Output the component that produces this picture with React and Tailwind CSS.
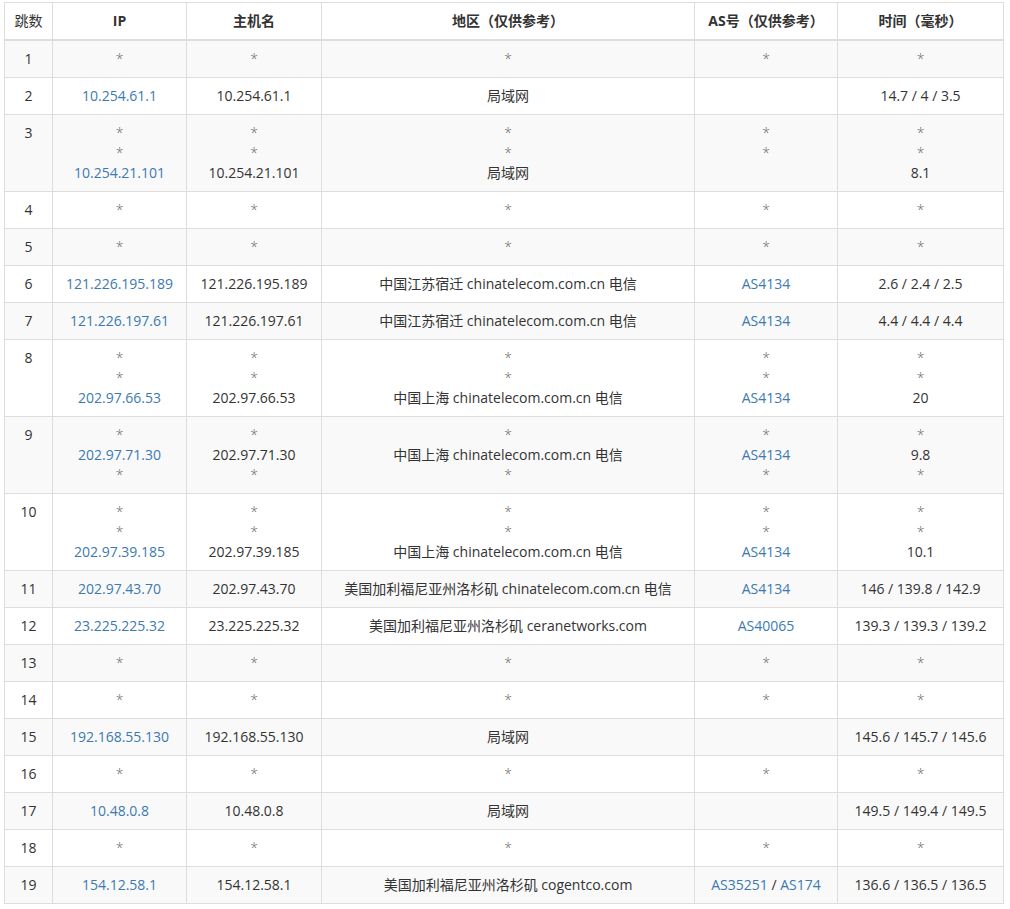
const L = (t) => ({ link: t });
const S = "*";
const CT = "chinatelecom.com.cn 电信";

const rows = [
  [[S], [S], [S], [S], [S]],
  [[L("10.254.61.1")], ["10.254.61.1"], ["局域网"], [""], ["14.7 / 4 / 3.5"]],
  [[S, S, L("10.254.21.101")], [S, S, "10.254.21.101"], [S, S, "局域网"], [S, S, ""], [S, S, "8.1"]],
  [[S], [S], [S], [S], [S]],
  [[S], [S], [S], [S], [S]],
  [[L("121.226.195.189")], ["121.226.195.189"], ["中国江苏宿迁 " + CT], [L("AS4134")], ["2.6 / 2.4 / 2.5"]],
  [[L("121.226.197.61")], ["121.226.197.61"], ["中国江苏宿迁 " + CT], [L("AS4134")], ["4.4 / 4.4 / 4.4"]],
  [[S, S, L("202.97.66.53")], [S, S, "202.97.66.53"], [S, S, "中国上海 " + CT], [S, S, L("AS4134")], [S, S, "20"]],
  [[S, L("202.97.71.30"), S], [S, "202.97.71.30", S], [S, "中国上海 " + CT, S], [S, L("AS4134"), S], [S, "9.8", S]],
  [[S, S, L("202.97.39.185")], [S, S, "202.97.39.185"], [S, S, "中国上海 " + CT], [S, S, L("AS4134")], [S, S, "10.1"]],
  [[L("202.97.43.70")], ["202.97.43.70"], ["美国加利福尼亚州洛杉矶 " + CT], [L("AS4134")], ["146 / 139.8 / 142.9"]],
  [[L("23.225.225.32")], ["23.225.225.32"], ["美国加利福尼亚州洛杉矶 ceranetworks.com"], [L("AS40065")], ["139.3 / 139.3 / 139.2"]],
  [[S], [S], [S], [S], [S]],
  [[S], [S], [S], [S], [S]],
  [[L("192.168.55.130")], ["192.168.55.130"], ["局域网"], [""], ["145.6 / 145.7 / 145.6"]],
  [[S], [S], [S], [S], [S]],
  [[L("10.48.0.8")], ["10.48.0.8"], ["局域网"], [""], ["149.5 / 149.4 / 149.5"]],
  [[S], [S], [S], [S], [S]],
  [[L("154.12.58.1")], ["154.12.58.1"], ["美国加利福尼亚州洛杉矶 cogentco.com"], ["AS2"], ["136.6 / 136.5 / 136.5"]],
];

const heads = ["跳数", "IP", "主机名", "地区（仅供参考）", "AS号（仅供参考）", "时间（毫秒）"];
const widths = ["w-[48px]", "w-[134px]", "w-[135px]", "w-[373px]", "w-[143px]", "w-[166px]"];

// one visual line inside a cell; "AS2" is the double-link AS cell of hop 19
function Line({ v }) {
  if (v === "AS2")
    return (
      <div className="h-5">
        <span className="text-[#3c7ab0]">AS35251</span> / <span className="text-[#3c7ab0]">AS174</span>
      </div>
    );
  if (typeof v === "object") return <div className="h-5 text-[#3c7ab0]">{v.link}</div>;
  if (v === S) return <div className="h-5 font-light text-[#666]">*</div>;
  return <div className="h-5">{v}</div>;
}

export default function App() {
  return (
    <div className="bg-white pl-[4px] pt-[2px]" style={{ fontFamily: '"Open Sans","Noto Sans CJK SC",sans-serif' }}>
      <table className="border-collapse border border-[#ddd] text-[14px] leading-5 text-[#333]">
        <thead>
          <tr>
            {heads.map((h, i) => (
              <th
                key={h}
                className={`${widths[i]} border border-[#ddd] border-b-2 px-2 py-[8px] text-center ${i === 0 ? "font-normal" : "font-bold"}`}
              >
                {h}
              </th>
            ))}
          </tr>
        </thead>
        <tbody>
          {rows.map((r, i) => (
            <tr key={i} className={i % 2 === 0 ? "bg-[#f9f9f9]" : "bg-white"}>
              <td className="border border-[#ddd] px-2 py-2 align-top text-center">{i + 1}</td>
              {r.map((cell, j) => (
                <td key={j} className="border border-[#ddd] px-2 py-2 align-top text-center whitespace-nowrap">
                  {cell.map((v, k) => (
                    <Line key={k} v={v} />
                  ))}
                </td>
              ))}
            </tr>
          ))}
        </tbody>
      </table>
    </div>
  );
}
